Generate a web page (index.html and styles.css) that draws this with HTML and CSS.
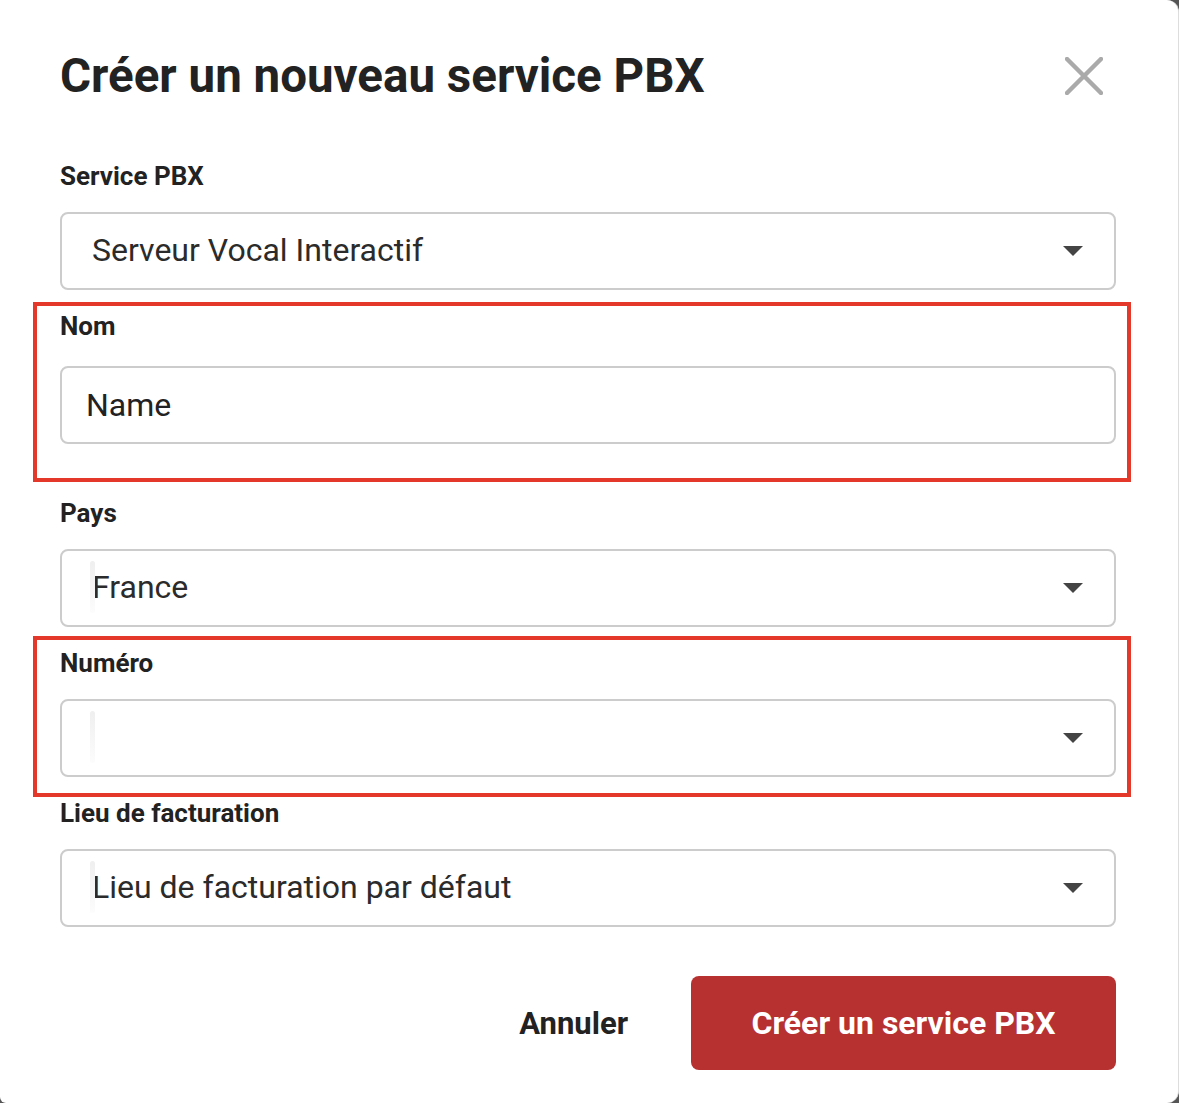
FILE: index.html
```html
<!DOCTYPE html>
<html lang="fr">
<head>
    <meta charset="UTF-8">
    <meta name="viewport" content="width=device-width, initial-scale=1.0">
    <title>Créer un nouveau service PBX</title>
    <link rel="stylesheet" href="styles.css">
</head>
<body>

<div class="modal">
    <header class="modal-header">
        <h1>Créer un nouveau service PBX</h1>
        <span class="close-btn">
            <svg width="38" height="38" viewBox="0 0 38 38">
                <path d="M2 2 L36 36 M36 2 L2 36" stroke="#aaaaaa" stroke-width="4.5" stroke-linecap="round"/>
            </svg>
        </span>
    </header>

    <form class="modal-form">
        <div class="form-group">
            <label>Service PBX</label>
            <div class="select-box">
                <span>Serveur Vocal Interactif</span>
                <span class="arrow"></span>
            </div>
        </div>

        <!-- Name field -->
        <div class="form-group name-group highlight highlight-name">
            <label for="pbxName">Nom</label>
            <input type="text" id="pbxName" class="text-input" value="Name">
        </div>

        <div class="form-group">
            <label>Pays</label>
            <div class="select-box">
                <span class="caret"></span>
                <span>France</span>
                <span class="arrow"></span>
            </div>
        </div>

        <div class="form-group highlight highlight-number">
            <label>Numéro</label>
            <div class="select-box">
                <span class="caret"></span>
                <span></span>
                <span class="arrow"></span>
            </div>
        </div>

        <div class="form-group">
            <label>Lieu de facturation</label>
            <div class="select-box">
                <span class="caret"></span>
                <span>Lieu de facturation par défaut</span>
                <span class="arrow"></span>
            </div>
        </div>

        <div class="modal-actions">
            <button type="button" class="cancel-btn">Annuler</button>
            <button type="button" class="create-btn">Créer un service PBX</button>
        </div>
    </form>
</div>

</body>
</html>
```

FILE: styles.css
```css
/* Page */
html, body {
    margin: 0;
    padding: 0;
    height: 1103px;
    overflow: hidden;
}

body {
    font-family: Roboto, "Liberation Sans", Arial, sans-serif;
    background: #555555;
    color: #222222;
}

/* Dialog */
.modal {
    box-sizing: border-box;
    width: 1179px;
    height: 1103px;
    background: white;
    border-right: 1px solid #dddddd;
    border-radius: 0 12px 12px 6px;
    padding: 48px 62px 0 60px;
}

.modal-header {
    display: flex;
    align-items: center;
    justify-content: space-between;
}

.modal-header h1 {
    margin: 0;
    font-size: 47.5px;
    line-height: 56px;
    font-weight: 700;
    color: #222222;
}

.close-btn {
    display: flex;
    margin-right: 13px;
    cursor: pointer;
}

/* Form */
.modal-form {
    margin-top: 57px;
}

.form-group {
    margin-bottom: 21px;
}

.form-group label {
    display: block;
    font-size: 26px;
    line-height: 30px;
    font-weight: 700;
    color: #222222;
    margin-bottom: 21px;
}

.select-box {
    box-sizing: border-box;
    display: flex;
    align-items: center;
    height: 78px;
    padding: 0 31px 3px 30px;
    border: 2px solid #cccccc;
    border-radius: 8px;
    font-size: 32px;
    color: #2b2b2b;
    position: relative;
}

.select-box span:nth-last-child(2) {
    flex: 1;
}

.select-box .arrow {
    width: 0;
    height: 0;
    border-left: 10px solid transparent;
    border-right: 10px solid transparent;
    border-top: 10px solid #444444;
    margin-top: 3px;
}

/* faint caret line left of the value */
.select-box .caret {
    position: absolute;
    left: 28px;
    top: 10px;
    width: 5px;
    height: 52px;
    border-radius: 3px;
    background: linear-gradient(#efefef, #fcfcfc);
}

.name-group {
    margin-bottom: 54px;
}

.name-group label {
    margin-bottom: 25px;
}

.text-input {
    box-sizing: border-box;
    display: block;
    width: 100%;
    height: 78px;
    padding: 0 24px;
    border: 2px solid #cccccc;
    border-radius: 8px;
    font-family: inherit;
    font-size: 32px;
    color: #222222;
    outline: none;
}

/* Red annotation boxes */
.highlight {
    position: relative;
}

.highlight::after {
    content: "";
    position: absolute;
    left: -27px;
    right: -15px;
    border: 4px solid #e3382a;
    pointer-events: none;
}

.highlight-name::after {
    top: -9px;
    bottom: -38px;
}

.highlight-number::after {
    top: -12px;
    bottom: -20px;
}

/* Actions */
.modal-actions {
    display: flex;
    justify-content: flex-end;
    align-items: center;
    gap: 63px;
    margin-top: 49px;
}

.cancel-btn {
    background: none;
    border: none;
    padding: 0;
    font-family: inherit;
    font-size: 31px;
    font-weight: 700;
    color: #222222;
    cursor: pointer;
}

.create-btn {
    width: 425px;
    height: 94px;
    background: #b73131;
    color: white;
    border: none;
    border-radius: 8px;
    font-family: inherit;
    font-size: 32px;
    font-weight: 700;
    cursor: pointer;
}
```
